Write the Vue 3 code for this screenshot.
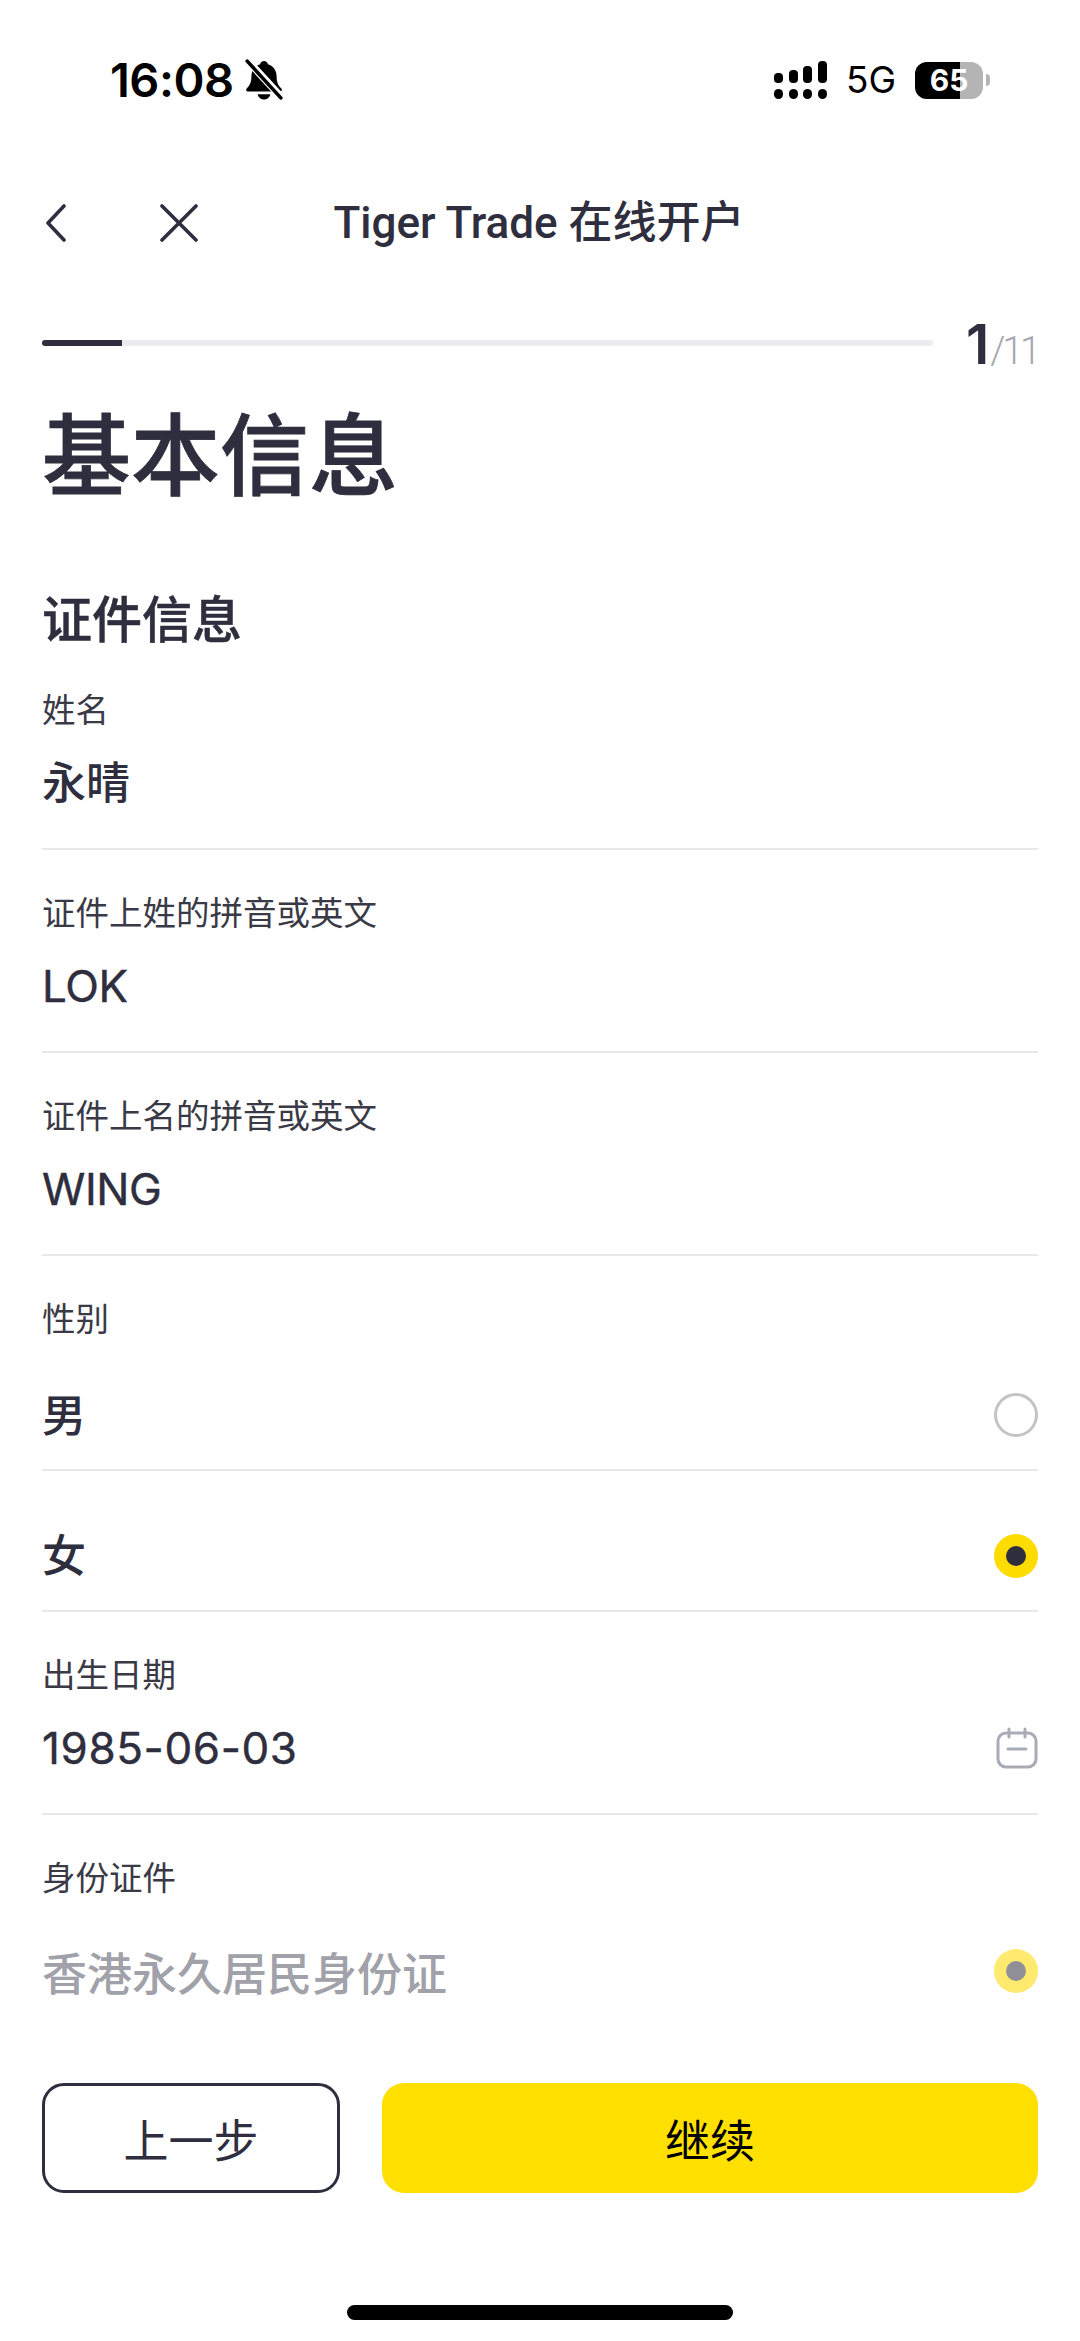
<script setup>
const textFields = [
  { label: '姓名', value: '永晴', latin: false },
  { label: '证件上姓的拼音或英文', value: 'LOK', latin: true },
  { label: '证件上名的拼音或英文', value: 'WING', latin: true },
]
const bars = [10, 13, 17, 22]
</script>

<template>
  <div class="page">
    <header class="status">
      <div class="status-left">
        <span class="time">16:08</span>
        <svg class="bell" viewBox="0 0 40 40" width="40" height="40">
          <path d="M20 2c2 0 3.400 1.300 3.700 3 5.300 1.500 8.300 6 8.300 11.500 0 5.500 1.300 8.500 4.500 11.500 1 1 .5 3-1.500 3H5c-2 0-2.500-2-1.500-3C6.700 25 8 22 8 16.500 8 11 11 6.500 16.300 5 16.600 3.300 18 2 20 2z" fill="#000"/>
          <path d="M14 33.500h12c-.5 3-3 5-6 5s-5.500-2-6-5z" fill="#000"/>
          <path d="M4 1l33 36" stroke="#fff" stroke-width="7"/>
          <path d="M4 2l32 35" stroke="#000" stroke-width="3.400" stroke-linecap="round"/>
        </svg>
      </div>
      <div class="status-right">
        <div class="signal">
          <div v-for="(h, i) in bars" :key="i" class="sig-col">
            <span class="sig-top" :style="{ height: h + 'px' }"></span>
            <span class="sig-dot"></span>
          </div>
        </div>
        <span class="net">5G</span>
        <div class="battery">
          <div class="batt-body"><span class="batt-fill"></span><span class="batt-num">65</span></div>
          <span class="batt-cap"></span>
        </div>
      </div>
    </header>

    <nav class="nav">
      <div class="nav-icons">
        <svg viewBox="0 0 24 38" width="24" height="38"><path d="M20 2L4 19l16 17" fill="none" stroke="#2e2e3e" stroke-width="3.600" stroke-linecap="round" stroke-linejoin="round"/></svg>
        <svg viewBox="0 0 40 38" width="40" height="38"><path d="M3 2l34 34M37 2L3 36" fill="none" stroke="#2e2e3e" stroke-width="3.600" stroke-linecap="round"/></svg>
      </div>
      <h1 class="nav-title">Tiger Trade 在线开户</h1>
    </nav>

    <div class="progress-row">
      <div class="track"><span class="track-fill"></span></div>
      <div class="step"><b>1</b><span>/11</span></div>
    </div>

    <h2 class="heading">基本信息</h2>
    <h3 class="section">证件信息</h3>

    <div v-for="f in textFields" :key="f.label" class="field">
      <div class="label">{{ f.label }}</div>
      <div class="value" :class="{ latin: f.latin }">{{ f.value }}</div>
    </div>

    <div class="gender-label">性别</div>
    <div class="choice first">
      <span class="choice-text">男</span>
      <span class="radio"></span>
    </div>
    <div class="choice">
      <span class="choice-text">女</span>
      <span class="radio on"><i></i></span>
    </div>

    <div class="field">
      <div class="label">出生日期</div>
      <div class="value latin with-icon">
        <span class="date">1985-06-03</span>
        <svg class="cal" viewBox="0 0 42 42" width="42" height="42">
          <rect x="2" y="6" width="38" height="34" rx="8" fill="none" stroke="#a9abb6" stroke-width="3"/>
          <path d="M13 2v8M29 2v8M12 22h18" fill="none" stroke="#a9abb6" stroke-width="3" stroke-linecap="round"/>
        </svg>
      </div>
    </div>

    <div class="id-block">
      <div class="label">身份证件</div>
      <div class="id-row">
        <span class="id-text">香港永久居民身份证</span>
        <span class="radio on dim"><i></i></span>
      </div>
    </div>

    <div class="actions">
      <button class="btn prev">上一步</button>
      <button class="btn next">继续</button>
    </div>
    <div class="home-wrap"><span class="home"></span></div>
  </div>
</template>

<style>
html, body { margin: 0; background: #fff; }
</style>

<style scoped>
.page {
  width: 1080px; height: 2341px; background: #fff; overflow: hidden; box-sizing: border-box;
  padding: 0 42px; color: #2e2e3e;
  font-family: Inter, "Noto Sans CJK SC", sans-serif;
}
.status { height: 170px; margin: 0 -42px; padding: 60px 90px 0 110px; box-sizing: border-box; display: flex; justify-content: space-between; align-items: flex-start; color: #000; }
.status-left { display: flex; align-items: center; height: 40px; gap: 9px; }
.time { font: 600 47px/40px Inter, sans-serif; letter-spacing: -0.5px; }
.bell { width: 42px; height: 42px; }
.status-right { display: flex; align-items: center; height: 40px; }
.signal { display: flex; gap: 5.600px; align-items: flex-end; }
.sig-col { display: flex; flex-direction: column; gap: 6px; align-items: center; }
.sig-top { width: 9px; background: #000; border-radius: 4px; display: block; }
.sig-dot { width: 9px; height: 10px; background: #000; border-radius: 5px; display: block; }
.net { font: 400 37px/40px Inter, sans-serif; margin-left: 19px; }
.battery { display: flex; align-items: center; margin-left: 19px; }
.batt-body { width: 68px; height: 37px; border-radius: 12px; background: #b4b4b4; position: relative; overflow: hidden; display: flex; align-items: center; justify-content: center; }
.batt-fill { position: absolute; left: 0; top: 0; bottom: 0; width: 45px; background: #000; }
.batt-num { position: relative; color: #fff; font: 700 30px/37px Inter, sans-serif; }
.batt-cap { width: 4px; height: 12px; background: #b4b4b4; border-radius: 0 4px 4px 0; margin-left: 3px; }

.nav { position: relative; height: 106px; padding-right: 2px; display: flex; align-items: center; justify-content: center; }
.nav-icons { position: absolute; left: 2px; top: 34px; display: flex; gap: 91px; }
.nav-title { margin: 0; font-family: Roboto, "Noto Sans CJK SC", sans-serif; font-size: 44px; font-weight: 500; line-height: 60px; }

.progress-row { height: 70px; margin-top: 32px; display: flex; align-items: center; justify-content: space-between; }
.track { width: 891px; height: 6px; background: #ececee; border-radius: 3px; overflow: hidden; }
.track-fill { display: block; width: 80px; height: 6px; background: #2e2e3e; }
.step { display: flex; align-items: baseline; padding-top: 2px; }
.step b { font-size: 55px; font-weight: 600; }
.step span { font-family: Roboto, sans-serif; font-size: 38px; font-weight: 300; letter-spacing: -3.200px; margin-left: 1px; color: #a6a7b0; }

.heading { margin: 14px 0 0; font-size: 89px; font-weight: 500; line-height: 128px; -webkit-text-stroke: 0.8px #2e2e3e; }
.section { margin: 65px 0 0; font-size: 50px; font-weight: 500; line-height: 70px; -webkit-text-stroke: 0.5px #2e2e3e; }

.field { height: 203px; box-sizing: border-box; border-bottom: 2px solid #e8e8ec; padding-top: 40px; }
.section + .field { height: 195px; padding-top: 32px; }
.label { font-size: 33.500px; line-height: 46px; color: #3a3a46; }
.value { font-size: 44px; font-weight: 500; line-height: 64px; margin-top: 18px; }
.value.latin { font-weight: 400; letter-spacing: -0.4px; -webkit-text-stroke: 0.4px #2e2e3e; }
.with-icon { display: flex; justify-content: space-between; align-items: center; }
.value .date { letter-spacing: 0.600px; }

.gender-label { font-size: 33.500px; line-height: 46px; padding-top: 40px; color: #3a3a46; }
.choice { height: 141px; padding-top: 30px; box-sizing: border-box; border-bottom: 2px solid #e8e8ec; display: flex; justify-content: space-between; align-items: center; }
.choice.first { height: 129px; padding-top: 19px; }
.choice-text { font-size: 44px; font-weight: 500; margin-bottom: 5px; }
.radio { width: 44px; height: 44px; box-sizing: border-box; border: 3px solid #c4c4c6; border-radius: 50%; display: flex; align-items: center; justify-content: center; }
.radio.on { background: #ffdc00; border: 0; }
.radio.on i { width: 20px; height: 20px; border-radius: 50%; background: #2e2e3e; display: block; }
.radio.dim { background: #ffea70; }
.radio.dim i { background: #8f9097; }

.id-block { padding-top: 40px; }
.id-row { display: flex; justify-content: space-between; align-items: center; margin-top: 38px; height: 64px; }
.id-text { font-size: 45px; font-weight: 500; color: #a0a1a9; }

.actions { display: flex; gap: 42px; margin-top: 80px; }
.btn { height: 110px; border-radius: 22px; font-family: inherit; font-size: 45px; }
.prev { width: 298px; background: #fff; border: 3px solid #2e2e3e; color: #2e2e3e; }
.next { flex: 1; background: #ffe000; border: 0; color: #000; }
.home-wrap { display: flex; justify-content: center; margin-top: 112px; }
.home { width: 386px; height: 15px; border-radius: 8px; background: #000; }
</style>
